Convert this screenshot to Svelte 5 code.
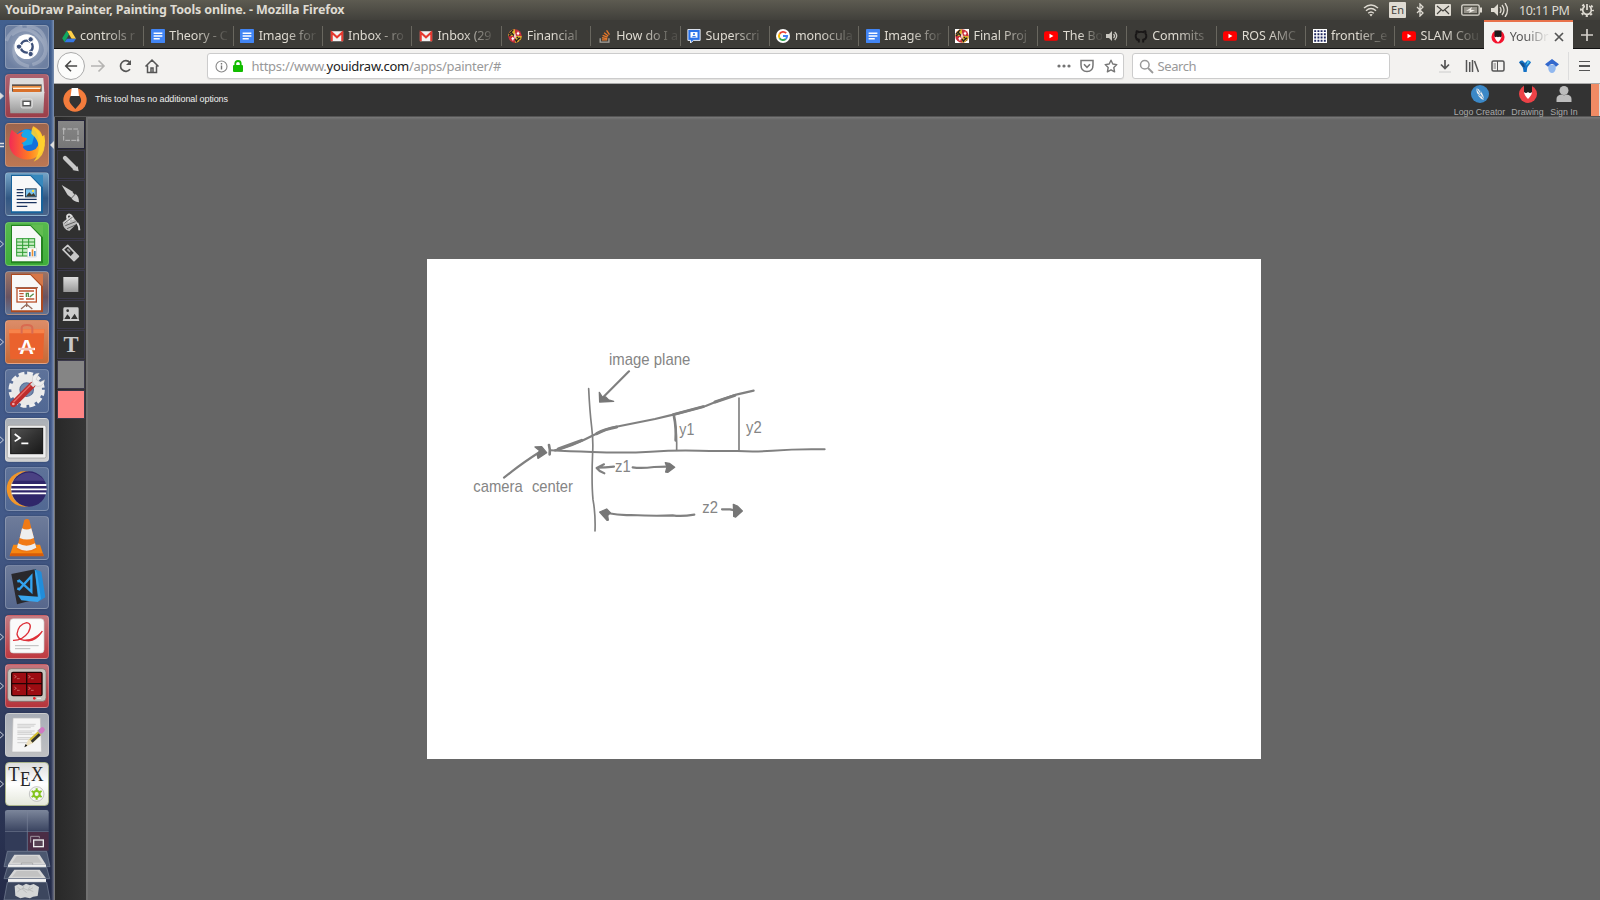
<script>
  const tabs = [
    ['drive', 'controls r'], ['docs', 'Theory - C'], ['docs', 'Image for'], ['gmail', 'Inbox - ro'],
    ['gmail', 'Inbox (29'], ['umd', 'Financial'], ['stack', 'How do I a'], ['groups', 'Superscri'],
    ['google', 'monocula'], ['docs', 'Image for'], ['umdsq', 'Final Proj'], ['yt', 'The Bo', 'sound'],
    ['github', 'Commits'], ['yt', 'ROS AMC'], ['grid', 'frontier_e'], ['yt', 'SLAM Cou'], ['draw', 'YouiDr', 'close']
  ];
  const apps = [
    ['dash', ''], ['files', 'solid'], ['firefox', 'double'], ['writer', ''], ['calc', 'open'], ['impress', ''],
    ['software', 'open'], ['settings', ''], ['terminal', 'open'], ['eclipse', ''], ['vlc', ''], ['code', ''],
    ['pdf', 'open'], ['terminator', 'open'], ['gedit', 'open'], ['tex', 'open']
  ];
  const tools = ['select', 'pencil', 'brush', 'bucket', 'eraser', 'rect', 'image', 'text', 'gray', 'pink'];
</script>

{#snippet favicon(k)}
  <svg class="fav" viewBox="0 0 16 16">
    {#if k === 'drive'}
      <path d="M5.5 2h5L16 11h-5z" fill="#ffcf48" /><path d="M5.5 2 8 6.4 3 15 .2 10.700z" fill="#11a861" /><path d="M5.600 11H16l-2.800 4H3z" fill="#3777e3" />
    {:else if k === 'docs'}
      <rect width="16" height="16" rx="1" fill="#4285f4" /><path d="M3 4h10v1.700H3zM3 7.200h10v1.700H3zM3 10.400h7V12H3z" fill="#fff" />
    {:else if k === 'gmail'}
      <rect x="1" y="2.500" width="14" height="11.500" rx="1" fill="#f2f2f2" /><path d="M2 14V4l6 5.500L14 4v10" fill="none" stroke="#e5392f" stroke-width="2.300" />
    {:else if k === 'umd' || k === 'umdsq'}
      {#if k === 'umdsq'}<rect width="16" height="16" fill="#fff" />{/if}
      <circle cx="8" cy="8" r="7.700" fill="#c9303a" /><path d="M8 .3A7.700 7.700 0 0 0 .3 8H8zM8 15.700A7.700 7.700 0 0 0 15.700 8H8z" fill="#dcb52e" />
      <path d="m3 3 4 5M1 6l5-5M1 8l3-2M9 14l5-4M10 9l4 4M8 11l2 4" stroke="#222" stroke-width="1.500" /><path d="M10 5h3M11.500 3v4M4 11h3M5.500 9v4" stroke="#fff" stroke-width="1.400" />
      <path d="m8 4 1.500 4L8 12 6.500 8z" fill="#f4c8c0" />
    {:else if k === 'stack'}
      <path d="M2.500 10.500V15h10v-4.500" fill="none" stroke="#a8a39c" stroke-width="1.500" /><path d="M4.500 12.500h6M4.600 10l6 .9M5.300 7.200l5.600 2.200M7 4.300l4.700 3.700M9.800 1.500l3.300 5" stroke="#e8782a" stroke-width="1.500" />
    {:else if k === 'groups'}
      <path d="M1 .5h14v12.500H7.500L4 16v-3H1z" fill="#2a72e8" stroke="#fff" /><rect x="4" y="3.500" width="8" height="6.500" fill="#fff" /><circle cx="8" cy="5.800" r="1.200" fill="#2a72e8" /><path d="M5 9.500q3-3 6 0z" fill="#2a72e8" />
    {:else if k === 'google'}
      <circle cx="8" cy="8" r="8" fill="#fff" /><g fill="none" stroke-width="2.200"><path d="M11.600 4.800A4.700 4.700 0 0 0 4.100 5.500" stroke="#ea4335" /><path d="M4.100 5.500a4.700 4.700 0 0 0 0 5" stroke="#fbbc05" /><path d="M4.100 10.500a4.700 4.700 0 0 0 7 1" stroke="#34a853" /><path d="M11.100 11.500A4.700 4.700 0 0 0 12.700 8H8" stroke="#4285f4" /></g>
    {:else if k === 'yt'}
      <rect x="0" y="2.500" width="16" height="11" rx="2.500" fill="#f00" /><path d="m6.300 5.500 4.500 2.500-4.500 2.500z" fill="#fff" />
    {:else if k === 'github'}
      <path d="M5.500 15.500v-3q-2 .5-3-1.300M10.500 15.500v-3.200q3.600-.5 3.600-4.300 0-1.600-1-2.700.4-1.400-.2-2.700-1.300 0-2.500 1-2.400-.6-4.800 0-1.200-1-2.500-1-.6 1.300-.2 2.700-1 1.100-1 2.700 0 3.800 3.600 4.300" fill="none" stroke="#191717" stroke-width="2.200" />
    {:else if k === 'grid'}
      <rect width="16" height="16" fill="#fff" /><path d="M2.500 0v16M6.200 0v16M9.800 0v16M13.500 0v16" stroke="#202860" stroke-width="2.200" stroke-dasharray="2.200 1.470" stroke-dashoffset="-1.300" />
    {:else if k === 'draw'}
      <circle cx="8" cy="8" r="7.500" fill="#f4142e" /><path d="M4 7h8q0 3-4 7-4-4-4-7" fill="#fff" /><path d="M4 .5h8v7q-1.500 1.500-2.700 0-1.300 1.500-2.600 0-1.200 1.500-2.700 0z" fill="#1c1c1c" />
    {/if}
  </svg>
{/snippet}

{#snippet appIcon(k)}
  <svg viewBox="0 0 132 132">
    {#if k === 'dash'}
      <g fill="none" stroke="#fff" stroke-width="10" opacity=".2"><path d="M65 6q48-3 57 48t-40 65" /><path d="M20 30q45-35 82 5t5 70" /><path d="M30 58q-15 55 42 66" /><path d="M4 48q12-35 48-44" /></g>
      <circle cx="65" cy="65" r="37" fill="#fff" /><circle cx="65" cy="65" r="18" fill="none" stroke="#3d5079" stroke-width="7" stroke-dasharray="33 4.700" stroke-dashoffset="14" />
      <g fill="#3d5079" stroke="#fff" stroke-width="3"><circle cx="42" cy="65" r="8" /><circle cx="77" cy="43" r="8" /><circle cx="77" cy="87" r="8" /></g>
    {:else if k === 'files'}
      <path d="M15 12h100l3 45H12z" fill="#ddd" /><path d="M21 31h89v22H21z" fill="#5e514b" /><path d="M22 36h86v7H22z" fill="#e98b3e" /><path d="M24 41h82v4H24z" fill="#fff3e0" /><path d="M24 45h82v9H24z" fill="#d9712c" />
      <path d="M12 54h106l-3 64H16z" fill="url(#metal)" /><rect x="48" y="75" width="34" height="27" rx="5" fill="#bbb" stroke="#eee" stroke-width="2" /><rect x="54" y="82" width="22" height="13" fill="#fff" stroke="#555" stroke-width="4" />
    {:else if k === 'firefox'}
      <circle cx="68" cy="62" r="43" fill="#1470dc" /><path d="M50 24q22-12 39 10l-8 30-28 6z" fill="#19a7ea" />
      <path d="M20 20q10 8 17 14 7-8 19-8-12 9-4 16l14 4q-2 10-17 14 9 3 5 14 12 15 30 8 21-9 16-35-3-19-14-30l-1-8q24 13 27 31l6-4q8 37-15 59-25 22-57 11Q9 93 13 48q2-16 7-28z" fill="url(#fox)" />
      <path d="M84 10q32 20 35 56 0 35-33 50 18-24 15-46-2-22-22-38 0-12 5-22z" fill="#ffd22f" opacity=".9" />
    {:else if k === 'writer' || k === 'calc' || k === 'impress'}
      <path d="M18 8h64l32 33v83H18z" fill={k === 'writer' ? '#17639c' : k === 'calc' ? '#22821f' : '#ad4a20'} />
      <path d="M21 12h55l32 33v73H21z" fill="#f8f8f8" /><path d="M76 8h38v38z" fill={k === 'writer' ? '#3688bd' : k === 'calc' ? '#62bd51' : '#d77748'} />
      {#if k === 'writer'}
        <path d="M35 53h20M35 62h20M35 71h20M35 82h60M35 92h60M35 103h32" stroke="#1c3560" stroke-width="4" /><rect x="60" y="49" width="35" height="27" fill="#28425d" /><rect x="63" y="52" width="29" height="21" fill="#7cc4ef" /><path d="m63 73 10-12 7 7 6-5 6 10z" fill="#403f32" /><circle cx="84" cy="57" r="3.500" fill="#ffe13b" />
      {:else if k === 'calc'}
        <rect x="35" y="50" width="54" height="52" fill="#c9efc5" stroke="#2e9b33" stroke-width="3" /><path d="M35 60h54M35 70h54M35 80h54M35 91h54M53 50v52M71 50v52" stroke="#2e9b33" stroke-width="3" /><rect x="67" y="78" width="28" height="27" fill="#fff" stroke="#aaa" /><path d="M72 103V90h5v13z" fill="#3878bd" /><path d="M80 103V82h5v21z" fill="#e99034" /><path d="M87 103V87h5v16z" fill="#4b91d2" />
      {:else}
        <path d="M31 50h68M65 93v15m-17 6 17-14 17 14" stroke="#966c5c" stroke-width="4" fill="none" /><rect x="36" y="52" width="58" height="41" fill="#fff" stroke="#ba5430" stroke-width="4" /><path d="M42 60h45M43 68h13M43 76h13M43 84h13M63 84h25" stroke="#be5635" stroke-width="4" /><path d="M64 78V67h6v11M74 78l12-10" stroke="#538e4b" stroke-width="4" fill="none" />
      {/if}
    {:else if k === 'software'}
      <path d="M12 28h106l-4 89H16z" fill="#ea622d" /><path d="M12 28h106v12H12z" fill="#f7834a" /><path d="M50 41V24q0-9 16-9t16 9v17" fill="none" stroke="#d96a50" stroke-width="6" /><text x="65" y="101" text-anchor="middle" font-family="Liberation Sans" font-weight="700" font-size="61" fill="#fff">A</text><path d="M40 87h50" stroke="#fff" stroke-width="7" /><path d="M44 87h42" stroke="#e6562d" stroke-width="2" />
    {:else if k === 'settings'}
      <circle cx="65" cy="62" r="48" fill="none" stroke="#eee" stroke-width="13" stroke-dasharray="17 8.130" /><circle cx="65" cy="62" r="34" fill="none" stroke="#e9e9e9" stroke-width="24" /><circle cx="65" cy="62" r="19" fill="#728aac" />
      <path d="M25 105 82 48" stroke="#bd2d2d" stroke-width="19" stroke-linecap="round" /><path d="m26 99 50-50" stroke="#e76a65" stroke-width="4" /><path d="m80 50 17-17" stroke="#ddd" stroke-width="13" /><path d="M103 12q-23 1-21 24 3 15 17 16 18-1 20-20L105 39l-12-8z" fill="#eee" stroke="#aaa" /><circle cx="25" cy="105" r="4" fill="#eaa" />
    {:else if k === 'terminal'}
      <rect x="7" y="22" width="116" height="98" rx="5" fill="#eee" stroke="#999" stroke-width="2" /><rect x="17" y="31" width="96" height="76" fill="url(#black)" stroke="#111" stroke-width="3" /><path d="m29 48 16 12-16 10M49 76h21" fill="none" stroke="#fff" stroke-width="5" />
    {:else if k === 'eclipse'}
      <circle cx="58" cy="66" r="53" fill="#f39526" /><circle cx="68" cy="66" r="52" fill="#cfa56b" /><circle cx="72" cy="66" r="53" fill="#2f266a" /><path d="M26 41q45-49 94 0z" fill="#655c9c" opacity=".5" /><path d="M19 54h105M18 67h107M20 79h103" stroke="#fff" stroke-width="5.500" />
    {:else if k === 'vlc'}
      <path d="M25 86h80l11 33H14z" fill="#f68712" /><path d="M17 112h97l2 9H14z" fill="#d75c0a" /><path d="M58 12q8-6 15 0l22 88q-30 19-60 0z" fill="#f17a15" /><path d="m51 37-7 29q22 9 43 0l-8-29q-14 7-28 0zM39 82l-3 13q29 18 58 0l-4-13q-25 14-51 0z" fill="#eee" />
    {:else if k === 'code'}
      <path d="m19 27 74-15 11 88-68 18z" fill="#29282c" /><path d="m89 13 20 7 12 77-21 13z" fill="#218dda" /><path d="m89 13 9 66 2 16-61-4 10 15 49 5 10-10-12-76z" fill="#38a6ee" /><path d="m37 50 6-3 36 33V34L43 73l-6-3" fill="none" stroke="#33a3ef" stroke-width="7" />
    {:else if k === 'pdf'}
      <rect x="15" y="11" width="102" height="103" rx="10" fill="#fafafa" stroke="#ccc" stroke-width="2" /><path d="M24 76Q52 77 70 52q14-26-5-29-25 5-29 34 5 26 44 17 22-7 32-26" fill="none" stroke="#de3038" stroke-width="4" /><path d="M45 72q31 10 67-24-20 38-52 30z" fill="#de3038" /><path d="M30 92h71M30 101h46" stroke="#bbb" stroke-width="3" />
    {:else if k === 'terminator'}
      <rect x="8" y="14" width="115" height="98" rx="11" fill="#c7c5bf" stroke="#74716b" stroke-width="2" /><rect x="20" y="25" width="91" height="70" rx="4" fill="#9c0c12" stroke="#230405" stroke-width="4" /><path d="M65 25v70M20 59h91" stroke="#230405" stroke-width="4" /><path d="m28 34 6 4-6 4m8 2h8M70 34l6 4-6 4m8 2h8M28 69l6 4-6 4m8 2h8M70 69l6 4-6 4m8 2h8" fill="none" stroke="#e08b84" stroke-width="2" /><circle cx="88" cy="103" r="4" fill="#ed2028" /><path d="M96 103h12" stroke="#eee" stroke-width="3" />
    {:else if k === 'gedit'}
      <path d="M24 15h82l4 102H21z" fill="#f5f5f5" stroke="#bbb" stroke-width="2" /><path d="M37 34h55M37 39h51M37 44h40M37 54h52M37 59h44M37 64h55M37 74h47M37 79h39M37 89h35" stroke="#bbb" stroke-width="2" /><path d="m59 103 12-26 13 13z" fill="#eee0bc" /><path d="m78 84 26-24" stroke="#d4bd31" stroke-width="15" /><path d="m80 86 24-22" stroke="#333" stroke-width="8" /><path d="m102 59 7-6" stroke="#aaa" stroke-width="16" /><path d="m109 53 3-3" stroke="#d07ac2" stroke-width="15" stroke-linecap="round" /><path d="m58 103 4-10 5 5z" fill="#111" />
    {:else if k === 'tex'}
      <g font-family="Liberation Serif" font-size="66" fill="#272727"><text x="10" y="57" textLength="34" lengthAdjust="spacingAndGlyphs">T</text><text x="45" y="71" textLength="32" lengthAdjust="spacingAndGlyphs">E</text><text x="78" y="57" textLength="38" lengthAdjust="spacingAndGlyphs">X</text></g><circle cx="95" cy="96" r="22" fill="#f5f5f5" stroke="#aaa" stroke-width="2" /><circle cx="95" cy="96" r="9" fill="none" stroke="#84c41f" stroke-width="6" /><path d="M95 79v8m0 18v8M80 87l8 5m14 8 8 5M80 105l8-5m14-8 8-5" stroke="#84c41f" stroke-width="6" />
    {/if}
  </svg>
{/snippet}

{#snippet toolIcon(k)}
  <svg viewBox="0 0 84 84">
    {#if k === 'select'}<rect x="20" y="27" width="43" height="34" fill="none" stroke="#bbb" stroke-width="3" stroke-dasharray="14 4" stroke-dashoffset="7" /><path d="M16 27h8M20 23v8M59 61h8M63 57v8" stroke="#bbb" stroke-width="3" />
    {:else if k === 'pencil'}<path d="m24 24 30 30" stroke="#c8c8c8" stroke-width="13" stroke-linecap="round" /><path d="m46 60 19 4-3-15z" fill="#c8c8c8" />
    {:else if k === 'brush'}<path d="m14 15 31 19 8 11-9 9-12-9z" fill="#ccc" /><path d="m43 53 11-12q12 6 12 26-18-3-23-14z" fill="#ccc" /><path d="m43 55 12-13" stroke="#333" stroke-width="2" />
    {:else if k === 'bucket'}<path d="m17 37 27-22 18 23-25 25q-19-4-20-26z" fill="#bbb" /><path d="M37 37Q25 17 34 14q10-2 14 16M22 39l24-17M61 39q6 9 6 22" fill="none" stroke="#ddd" stroke-width="6" /><path d="m22 40 25-19m-22 26 31-12m-26 21 28-12" stroke="#333" stroke-width="2" />
    {:else if k === 'eraser'}<path d="m18 29 14-13 32 33-13 13z" fill="none" stroke="#ccc" stroke-width="5" stroke-linejoin="round" /><path d="m39 50 13-13 13 13-13 13z" fill="#c7c7c7" /><path d="m29 29 4-4 8 8-4 4z" fill="#999" />
    {:else if k === 'rect'}<rect x="19" y="21" width="45" height="45" fill="url(#metal)" />
    {:else if k === 'image'}<path d="M23 22h38q4 0 4 4v30l2 7H17l2-7V26q0-4 4-4z" fill="#ccc" /><circle cx="32" cy="32" r="4" fill="#333" /><path d="m22 57 9-14 8 9v5zM42 57l11-16 9 16z" fill="#333" />
    {:else if k === 'text'}<text x="42" y="65" text-anchor="middle" font-family="Liberation Serif" font-weight="700" font-size="68" fill="#c8c8c8">T</text>{/if}
  </svg>
{/snippet}

<svg class="defs" width="0" height="0"><defs>
  <linearGradient id="metal" x2="0" y2="1"><stop stop-color="#dedede" /><stop offset="1" stop-color="#999" /></linearGradient>
  <linearGradient id="fox" x2="1" y2="0"><stop stop-color="#f32b54" /><stop offset=".55" stop-color="#ff7b24" /><stop offset="1" stop-color="#ffd32b" /></linearGradient>
  <linearGradient id="black" x2="1" y2="1"><stop stop-color="#555" /><stop offset=".5" stop-color="#333" /><stop offset="1" stop-color="#181818" /></linearGradient>
</defs></svg>

<div class="screen">
  <header class="titlebar">
    <span class="title">YouiDraw Painter, Painting Tools online. - Mozilla Firefox</span>
    <div class="indicators">
      <svg class="wifi" viewBox="0 0 16 14"><g fill="none" stroke="#dfdbd2" stroke-width="1.400"><path d="M1 5q7-6 14 0M3 7.700q5-4.500 10 0M5.200 10.300q2.800-2.600 5.600 0" /></g><path d="m6.300 11.600 1.700 1.800 1.700-1.800q-1.700-1.300-3.400 0" fill="#dfdbd2" /></svg>
      <span class="lang">En</span>
      <svg class="bt" viewBox="0 0 8 14"><path d="m1 4 6 6-3 3V1l3 3-6 6" fill="none" stroke="#dfdbd2" stroke-width="1.300" /></svg>
      <svg class="mail" viewBox="0 0 16 12"><rect width="16" height="12" rx="1" fill="#dfdbd2" /><path d="m2 2 6 5 6-5M2 10l4-4m8 4-4-4" fill="none" stroke="#45433e" stroke-width="1.100" /></svg>
      <svg class="battery" viewBox="0 0 21 12"><rect x=".8" y=".8" width="17.400" height="10.400" rx="1.500" fill="none" stroke="#dfdbd2" stroke-width="1.300" /><path d="M19 3.500h2v5h-2z" fill="#dfdbd2" /><path d="M3 3h13v6H3z" fill="#96938a" /><path d="m5 7 6-4-1 3h4L8 9l1-2.500z" fill="#efece5" /></svg>
      <svg class="volume" viewBox="0 0 18 14"><path d="M0 5h3l4-4v12L3 9H0z" fill="#dfdbd2" /><path d="M9 4q2 3 0 6m2-8q4 5 0 10m3-12q5 7 0 14" fill="none" stroke="#dfdbd2" stroke-width="1.300" /></svg>
      <span class="clock">10:11 PM</span>
      <svg class="gear" viewBox="0 0 14 14"><circle cx="7" cy="7" r="4.300" fill="none" stroke="#dfdbd2" stroke-width="1.700" /><circle cx="7" cy="7" r="6" fill="none" stroke="#dfdbd2" stroke-width="1.900" stroke-dasharray="2.200 2.512" stroke-dashoffset="1.100" /><path d="M7 0v7" stroke="#504e47" stroke-width="4" /><path d="M7 1v6" stroke="#dfdbd2" stroke-width="1.700" /></svg>
    </div>
  </header>

  <div class="desktop">
    <aside class="launcher">
      {#each apps as [name, mark]}
        <div class="tile {name}">
          {@render appIcon(name)}
          {#if mark}<svg class="mark" viewBox="0 0 5 8">{#if mark === 'double'}<path d="M0 2.500h4M0 5.500h4" stroke="#ddd" stroke-width="1.500" />{:else}<path d="M0 .8 3.500 4 0 7.200" fill={mark === 'solid' ? '#ddd' : 'none'} stroke="#ccd2dd" />{/if}</svg>{/if}
          {#if name === 'firefox'}<i class="focus"></i>{/if}
        </div>
      {/each}
      <svg class="stack" viewBox="0 0 162 210">
        <rect x="15" width="131" height="124" rx="8" fill="#323b58" /><path d="M23 0h116q7 0 7 7v54H15V7q0-7 8-7" fill="url(#pane)" /><path d="M84 66h62v56H84z" fill="#4b2d45" /><path d="M82 1v122M15 64h131" stroke="#7a8499" stroke-width="2" /><path d="M92 98V79h26v6" fill="none" stroke="#9e929d" stroke-width="3" /><rect x="101" y="90" width="29" height="20" fill="#584354" stroke="#eee" stroke-width="4" />
        <path d="M22 124h118l10 46H12z" fill="#4b5770" stroke="#7c879a" stroke-width="2" /><path d="M43 134h76l19 30H24z" fill="#d6d6d6" /><path d="M24 164h114v9H24z" fill="#f0f0f0" /><path d="M50 138h62l14 20H36z" fill="#c2c2c2" /><path d="M64 164v-5h34v5" fill="none" stroke="#999" stroke-width="2" />
        <path d="M22 172h118l9 34H12z" fill="#424d65" stroke="#7c879a" stroke-width="2" /><path d="M43 179h76l19 26H24z" fill="#d6d6d6" /><path d="M50 183h62l14 17H36z" fill="#c2c2c2" />
        <defs><linearGradient id="pane" x2="0" y2="1"><stop stop-color="#7c869b" /><stop offset="1" stop-color="#3d4763" /></linearGradient></defs>
      </svg>
      <svg class="trash" viewBox="0 0 162 63"><path d="M24 0h114v9H24z" fill="#f0f0f0" /><path d="M22 10h118l10 53H12z" fill="#3c465e" stroke="#7c879a" stroke-width="2" /><path d="m44 21 12-5 12 4 10-6 12 5 11-4 16 9-4 27-14 2-9 5-15-3-14 3-15-8z" fill="#d4d6d6" /><path d="m52 24 8 7-8 9m20-21-4 12 12 10m10-19-5 9 15 7m-40-6 10-4 15 6 14-8" fill="none" stroke="#b0b2b2" stroke-width="2" /></svg>
    </aside>

    <main class="browser">
      <nav class="tabs">
        {#each tabs as [icon, label, extra], i}
          <div class="tab" class:active={i === 16} class:short={extra}>
            {@render favicon(icon)}<span>{label}</span>
            {#if extra === 'sound'}<svg class="extra" viewBox="0 0 12 12"><path d="M0 4h3l3-3v10L3 8H0z" fill="#c9c6bf" /><path d="M7.500 4q2 2 0 4m1.200-6q4 4 0 8" fill="none" stroke="#c9c6bf" stroke-width="1.300" /></svg>
            {:else if extra === 'close'}<svg class="extra" viewBox="0 0 12 12"><path d="m2 2 8 8m0-8-8 8" stroke="#555" stroke-width="1.700" /></svg>{/if}
          </div>
        {/each}
        <svg class="plus" viewBox="0 0 14 14"><path d="M7 1v12M1 7h12" stroke="#d3d0ca" stroke-width="1.700" /></svg>
      </nav>

      <div class="navbar">
        <span class="back"><svg width="16" height="16" viewBox="0 0 16 16"><path d="M15 8H2m6-6L2 8l6 6" fill="none" stroke="#484848" stroke-width="1.800" /></svg></span>
        <span class="nav"><svg width="16" height="16" viewBox="0 0 16 16"><path d="M1 8h13M8.500 2.500 14 8l-5.500 5.500" fill="none" stroke="#b5b4b2" stroke-width="1.600" /></svg></span>
        <span class="nav"><svg width="16" height="16" viewBox="0 0 16 16"><path d="M13 11.300a5.300 5.300 0 1 1-.2-6.800" fill="none" stroke="#555" stroke-width="1.700" /><path d="M14 2v5H9z" fill="#555" /></svg></span>
        <span class="nav"><svg width="16" height="16" viewBox="0 0 16 16"><path d="m1.500 8.500 6.500-6.500 6.500 6.500M3.500 7.500v7h9v-7M7 14v-4h2v4" fill="none" stroke="#555" stroke-width="1.500" /></svg></span>
        <div class="url">
          <svg width="13" height="13" viewBox="0 0 13 13"><circle cx="6.500" cy="6.500" r="5.500" fill="none" stroke="#888" stroke-width="1.100" /><path d="M6.500 5.500v4M6.500 3v1.400" stroke="#777" stroke-width="1.400" /></svg>
          <svg class="lock" width="10" height="12" viewBox="0 0 10 12"><path d="M2.300 6V3.500q0-2.500 2.700-2.500t2.700 2.500V6" fill="none" stroke="#12bc00" stroke-width="1.800" /><rect y="5" width="10" height="7" rx="1" fill="#12bc00" /></svg>
          <span class="address">https://www.<b>youidraw.com</b>/apps/painter/#</span>
          <svg class="push" width="14" height="14" viewBox="0 0 14 14"><g fill="#737373"><circle cx="2" cy="7" r="1.600" /><circle cx="7" cy="7" r="1.600" /><circle cx="12" cy="7" r="1.600" /></g></svg>
          <svg class="pocket" width="14" height="14" viewBox="0 0 14 14"><path d="M1 1.500h12v4.500q0 6.500-6 6.500T1 6z" fill="none" stroke="#777" stroke-width="1.500" /><path d="m4 5.300 3 3 3-3" fill="none" stroke="#777" stroke-width="1.600" /></svg>
          <svg width="14" height="14" viewBox="0 0 14 14"><path d="m7 1.200 1.800 3.800 4 .6-3 2.900.8 4.300L7 10.800l-3.600 2 .8-4.300-3-2.900 4-.6z" fill="none" stroke="#777" stroke-width="1.400" stroke-linejoin="round" /></svg>
        </div>
        <div class="search"><svg width="15" height="15" viewBox="0 0 15 15"><circle cx="5.800" cy="5.800" r="4.300" fill="none" stroke="#999" stroke-width="1.500" /><path d="m9 9 5 5" stroke="#999" stroke-width="1.800" /></svg><span>Search</span></div>
        <div class="actions">
          <span><svg width="14" height="14" viewBox="0 0 14 14"><path d="M7 1v8M3 5.500l4 4 4-4" fill="none" stroke="#555" stroke-width="1.700" /><path d="M1 13h12" stroke="#ccc" /></svg></span>
          <span><svg width="14" height="14" viewBox="0 0 14 14"><path d="M1.500 1v12M4.700 3v10M7.500 1v12M9.500 2l4 11" stroke="#555" stroke-width="1.500" /></svg></span>
          <span><svg width="14" height="14" viewBox="0 0 14 14"><rect x="1" y="2" width="12" height="10" rx="1.500" fill="none" stroke="#555" stroke-width="1.500" /><path d="M6.500 2v10" stroke="#555" /><path d="M2.500 5h2.500M2.500 7h2.500M2.500 9h2.500" stroke="#777" /></svg></span>
          <span><svg width="14" height="14" viewBox="0 0 14 14"><path d="M1 3.500Q2 1 4.500 1.500L7 4l2.500-2.500Q12 1 13 3.500L9.500 8q-.5 1-.8 5H5.500Q5.200 9 4.500 8z" fill="#1271c5" /><path d="m1.500 3 4.500 1.500 1 4-2.500-1z" fill="#174e87" /><path d="m9.500 2 2.500.7-4 4z" fill="#55c6ee" /></svg></span>
          <span><svg width="14" height="14" viewBox="0 0 14 14"><path d="M3.300 6h7.400v4q-1 4-3.700 4t-3.700-4z" fill="#91b8ef" /><path d="m7 0 7 5.200-3 2.600Q9.500 5 7 5 4.500 5 3 7.800L0 5.200z" fill="#3268cd" /></svg></span>
        </div>
        <span class="menu"><i></i><i></i><i></i></span>
      </div>

      <section class="painter">
        <div class="options">
          <svg class="logo" viewBox="0 0 72 72"><circle cx="36" cy="36" r="35" fill="#f47c3c" /><path d="M26 0h19l3 25H23z" fill="#fff" /><path d="M23 24h27q10 17-3 28L37 63 26 51q-12-13-3-27" fill="#333" /></svg>
          <span class="hint">This tool has no additional options</span>
          <div class="links">
            <span class="l1"><svg viewBox="0 0 18 18"><circle cx="9" cy="9" r="9" fill="#3b88c7" /><path d="M5 3q7 2 8 12-7-2-8-12" fill="#eee" /><path d="m5 3 9 13M8 3l2 5M4 8l6 3" stroke="#3b88c7" stroke-width=".8" /></svg>Logo Creator</span>
            <span class="l2"><svg viewBox="0 0 18 18"><circle cx="9" cy="9" r="9" fill="#ed4247" /><path d="M5 7h8q0 3-4 7-4-4-4-7" fill="#fff" /><path d="M5 0h8v7q-2 2-4 0-2 2-4 0z" fill="#202020" /></svg>Drawing</span>
            <span class="l3"><svg viewBox="0 0 18 18"><circle cx="9" cy="5.500" r="4.500" fill="#bdbdbd" /><path d="M1.500 17v-3q0-4 5-4.500 2.500 1.500 5 0 5 .5 5 4.500v3z" fill="#bdbdbd" /></svg>Sign In</span>
          </div>
          <i class="strip"></i>
        </div>
        <div class="work">
          <div class="toolbox">
            {#each tools as t}<div class="tool {t}">{@render toolIcon(t)}</div>{/each}
          </div>
          <div class="stage">
            <svg class="canvas" viewBox="427 259 834 500">
              <g transform="translate(460 340) scale(.33333)" stroke-linecap="round" stroke-linejoin="round">
                <g fill="none" stroke="#808080" stroke-width="6">
                  <path d="M386 146q3 65 9 115 5 41 3 75-4 90 1 143 8 44 6 94" stroke-width="5" />
                  <path d="M285 331q52-12 115-45 37-20 65-25l120-24 58-14 94-25q59-24 95-35l49-11" stroke-width="6.500" />
                  <path d="m295 327 70-26M410 281q25-14 60-20M640 224l90-24M765 186l60-20" stroke-width="9" />
                  <path d="M271 331q55 3 126 5 98 4 175-1 74-5 146-3 63 1 115 1 51 3 104-1 77-6 157-4" stroke-width="6" />
                  <path d="M267 315q4 15 2 28" stroke-width="8" /><path d="M837 174v156" stroke-width="5" /><path d="M642 229q7 30 5 72" stroke-width="8" /><path d="M645 250q6 35 5 80" stroke-width="5" />
                  <path d="m507 94-82 82M132 413l23-18q34-27 84-59" stroke-width="6.500" /><path d="M414 383q20 0 48-3M410 384q9 12 23 16m-23-16 22-11M518 382q25 4 64-1l39-1" stroke-width="6.500" />
                  <path d="M441 519q40 8 72 6 74 4 125 1 26 4 65-2M786 508h24l18 4" stroke-width="6.500" />
                </g>
                <g fill="#777" stroke="#777" stroke-width="4"><path d="m418 157 1 29 42-2-15-4-9-9-10 0z" /><path d="m225 321 20-1 15 18-26 17-2-9 7-14z" /><path d="m616 368 12 2 16 12-20 15-7-1 4-15z" /><path d="m440 507-21 9 22 25 4-1-2-13 8-9z" /><path d="m820 493 12 5 15 15-20 18-6-2v-14z" /></g>
                <g font-family="Liberation Sans" font-size="48" fill="#858585"><text x="447" y="74" textLength="244" lengthAdjust="spacingAndGlyphs">image plane</text><text x="40" y="456" textLength="148" lengthAdjust="spacingAndGlyphs">camera</text><text x="216" y="456" textLength="123" lengthAdjust="spacingAndGlyphs">center</text><text x="658" y="286" textLength="45" lengthAdjust="spacingAndGlyphs">y1</text><text x="858" y="279" textLength="47" lengthAdjust="spacingAndGlyphs">y2</text><text x="465" y="396" textLength="47" lengthAdjust="spacingAndGlyphs">z1</text><text x="727" y="519" textLength="47" lengthAdjust="spacingAndGlyphs">z2</text></g>
              </g>
            </svg>
          </div>
        </div>
      </section>
    </main>
  </div>
</div>

<style>
  :global(body) { margin: 0; overflow: hidden; }
  * { box-sizing: border-box; }
  svg { display: block; flex: none; }
  .defs { position: absolute; }
  .screen { width: 1600px; height: 900px; display: flex; flex-direction: column; overflow: hidden; font-family: "Noto Sans", "Open Sans", sans-serif; }
  .titlebar { height: 20px; flex: none; display: flex; align-items: center; justify-content: space-between; padding: 0 6px 0 5px; background: linear-gradient(#5d5b51, #41403b); color: #dfdbd2; }
  .title { font-weight: 700; font-size: 12.500px; letter-spacing: -.14px; white-space: nowrap; line-height: 20px; }
  .indicators { display: flex; align-items: center; }
  .wifi { width: 16px; height: 14px; margin-right: 10px; }
  .lang { width: 17px; height: 16px; line-height: 16px; text-align: center; border-radius: 1px; background: #dfdbd2; color: #45433e; font-size: 11px; }
  .bt { width: 8px; height: 14px; margin: 0 11px 0 10px; }
  .mail { width: 16px; height: 12px; margin-right: 10px; }
  .battery { width: 21px; height: 12px; margin-right: 9px; }
  .volume { width: 18px; height: 14px; margin-right: 10px; }
  .clock { width: 51px; font-size: 12.500px; letter-spacing: -.45px; white-space: nowrap; margin-right: 10px; }
  .gear { width: 14px; height: 14px; }
  .desktop { display: flex; flex: 1; min-height: 0; }
  .launcher { width: 54px; flex: none; padding: 5px 0 0 5px; display: flex; flex-direction: column; gap: 5.130px; overflow: hidden; background: linear-gradient(90deg, #0000 51px, #ffffff18 52px, #ffffff55), linear-gradient(#42608f, #375080 32%, #41598a 38%, #435a88 58%, #333f62 77%, #242b48); }
  .tile { position: relative; width: 44px; height: 44px; flex: none; border-radius: 4px; border: 1px solid #ffffff35; background: linear-gradient(#8393ae70, #60779e80); box-shadow: 0 0 2px #14213d80; }
  .tile > svg:first-child { width: 44px; height: 44px; margin: -1px; }
  .tile.dash { background: radial-gradient(#a8b4c9, #6e80a1 80%); }
  .tile.files { background: linear-gradient(#ad6270, #9b3e49); }
  .tile.firefox { background: linear-gradient(#9c654d, #bd7753); }
  .tile.writer { background: linear-gradient(#75a4c7, #315783 60%, #4c658a); }
  .tile.calc { background: linear-gradient(#57b94d, #3fae3a); }
  .tile.impress { background: linear-gradient(#9d7466, #685361 60%, #627393); }
  .tile.software { background: linear-gradient(#dc8c68, #c66936); }
  .tile.terminal { background: linear-gradient(#aaafb6, #d0d0d0); }
  .tile.vlc, .tile.code { background: linear-gradient(#6e7c9a, #56678c); }
  .tile.pdf { background: linear-gradient(#c47b82, #bf3940); }
  .tile.terminator { background: linear-gradient(#c4757d, #b6343b); }
  .tile.gedit { background: linear-gradient(#a9aeb7, #bfc0c2); }
  .tile.tex { background: linear-gradient(#ddd, #fff 50%, #e5e8dc); border-color: #acb58c; }
  .mark { position: absolute; left: -6px; top: 17px; width: 5px; height: 8px; }
  .focus { position: absolute; right: -6px; top: 17px; border: 4px solid transparent; border-right-color: #ddd; border-left: 0; }
  .stack { width: 54px; height: 70px; margin: -1px 0 0 -5px; }
  .trash { width: 54px; height: 21px; margin: -6px 0 0 -5px; }
  .browser { flex: 1; min-width: 0; display: flex; flex-direction: column; }
  .tabs { height: 29px; flex: none; display: flex; background: #3c3b37; border-bottom: 1px solid #111; }
  .tab { width: 89.370px; flex: none; display: flex; align-items: center; padding: 4px 0 0 7.500px; color: #dfdbd2; position: relative; }
  .tab + .tab { background: linear-gradient(#69675f, #69675f) 0 6px / 1px 20px no-repeat; }
  .tab .fav { width: 14px; height: 14px; }
  .tab span { width: 62px; margin-left: 4.500px; overflow: hidden; white-space: nowrap; font-size: 12.500px; letter-spacing: -.1px; line-height: 20px; mask-image: linear-gradient(90deg, #000 42%, #0002 90%); }
  .tab.short span { width: 39px; }
  .tab.tab.active { background: #f3f2f0; border-top: 2px solid #e9724b; color: #555; height: 29px; padding-top: 2px; z-index: 1; }
  .extra { width: 12px; height: 12px; margin-left: 4px; }
  .plus { width: 14px; height: 14px; margin: 8px 0 0 6.500px; }
  .navbar { height: 35px; flex: none; display: flex; align-items: center; background: #f3f2f0; border-bottom: 1px solid #aaa; color: #999; font-size: 13px; }
  .back { width: 28px; height: 28px; flex: none; margin-left: 2.500px; border: 1px solid #aaa; border-radius: 50%; background: #fcfcfb; display: grid; place-items: center; }
  .back svg { width: 14px; }
  .nav { width: 27px; flex: none; display: grid; place-items: center; }
  .url { width: 917px; height: 26px; flex: none; margin-left: 41px; display: flex; align-items: center; padding: 0 5px 0 7px; background: #fff; border: 1px solid #ccc; border-radius: 3px; box-shadow: 0 1px 1px #0001; }
  .lock { margin: -1px 8px 0 5px; }
  .address { flex: 1; font-size: 13px; letter-spacing: -.28px; margin-left: 1px; }
  .address b { font-weight: 400; color: #222; }
  .pocket { margin: 0 10px 0 9px; }
  .search { width: 258px; height: 26px; flex: none; margin-left: 8px; display: flex; align-items: center; gap: 4px; padding-left: 7px; background: #fff; border: 1px solid #ccc; border-radius: 3px; }
  .search svg { margin-left: -1px; }
  .search span { letter-spacing: -.4px; }
  .actions { display: flex; margin-left: 42px; padding-right: 3px; border-right: 1px solid #ddd; height: 28px; }
  .actions span { width: 26.700px; display: grid; place-items: center; }
  .menu { width: 11px; margin-left: 10px; display: grid; gap: 3px; }
  .menu i { height: 1.400px; background: #555; }
  .painter { flex: 1; min-height: 0; display: flex; flex-direction: column; background: #333; }
  .options { height: 33px; flex: none; display: flex; align-items: center; padding-left: 9px; border-bottom: 1px solid #555; font-family: "Liberation Sans", sans-serif; }
  .logo { width: 24px; height: 24px; }
  .hint { flex: 1; color: #eee; font-size: 9px; letter-spacing: -.09px; margin: -2px 0 0 8px; }
  .links { display: flex; height: 33px; color: #aaa; font-size: 8.800px; margin-right: 13px; }
  .links span { display: flex; flex-direction: column; align-items: center; white-space: nowrap; line-height: 11px; }
  .links svg { width: 18px; height: 18px; margin: 1px 0 4px; }
  .l1 { width: 51px; } .l2 { width: 31px; margin: 0 7px; } .l3 { width: 28px; }
  .strip { width: 9px; height: 32px; background: #f08b64; border-right: 1px solid #ddd; }
  .work { flex: 1; min-height: 0; display: flex; }
  .toolbox { width: 34px; flex: none; display: flex; flex-direction: column; padding: 3px 0 0 2px; gap: 1px; background: linear-gradient(90deg, #282828, #353535); border-right: 2px solid #707070; border-left: 1px solid #777; }
  .tool { width: 28px; height: 29px; flex: none; border: 1px solid #3b394b; background: #303030; }
  .tool svg { width: 28px; height: 28px; margin: -1px; }
  .tool.select { background: linear-gradient(#868686, #777); border: 1px solid #242438; }
  .tool.gray { background: #858585; }
  .tool.pink { background: #ff8585; }
  .stage { flex: 1; background: linear-gradient(#7a7a7a, #666 3px); padding: 142px 0 0 339px; }
  .canvas { width: 834px; height: 500px; background: #fff; }
</style>
